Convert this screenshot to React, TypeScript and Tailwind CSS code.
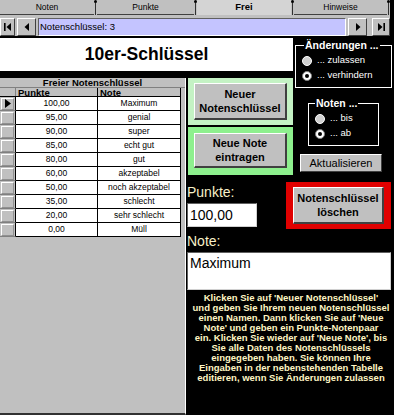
import React from "react";

const rows = [
  ["100,00", "Maximum"],
  ["95,00", "genial"],
  ["90,00", "super"],
  ["85,00", "echt gut"],
  ["80,00", "gut"],
  ["60,00", "akzeptabel"],
  ["50,00", "noch akzeptabel"],
  ["35,00", "schlecht"],
  ["20,00", "sehr schlecht"],
  ["0,00", "Müll"],
];

const hint = [
  "Klicken Sie auf 'Neuer Notenschlüssel'",
  "und geben Sie Ihrem neuen Notenschlüssel",
  "einen Namen. Dann klicken Sie auf 'Neue",
  "Note' und geben ein Punkte-Notenpaar",
  "ein. Klicken Sie wieder auf 'Neue Note', bis",
  "Sie alle Daten des Notenschlüssels",
  "eingegeben haben. Sie können Ihre",
  "Eingaben in der nebenstehenden Tabelle",
  "editieren, wenn Sie Änderungen zulassen",
];

const Sep = () => (
  <div className="flex flex-col items-center w-[3px] h-full">
    <div className="w-[3px] h-[3px] rounded-full bg-black" />
    <div className="w-px flex-1 bg-[#303030]" />
  </div>
);

const Tab = ({ label, w, active }: { label: string; w: string; active?: boolean }) => (
  <div
    className={`${w} h-full flex items-center justify-center ${
      active
        ? "bg-[#d4d4d4] font-bold text-[9.5px]"
        : "bg-[#c0c0c0] border-b border-[#404040] text-[8.5px]"
    } text-black`}
  >
    {label}
  </div>
);

const NavBtn = ({ w, children }: { w: string; children: React.ReactNode }) => (
  <div
    className={`${w} h-[18px] flex items-center justify-center bg-[#c0c0c0] border-t border-l border-white border-r border-b border-r-[#404040] border-b-[#404040]`}
  >
    {children}
  </div>
);

const Radio = ({ on }: { on?: boolean }) =>
  on ? (
    <div className="w-[10px] h-[10px] rounded-full bg-white border border-[#808080] flex items-center justify-center">
      <div className="w-[4px] h-[4px] rounded-full bg-black" />
    </div>
  ) : (
    <div className="w-[10px] h-[10px] rounded-full bg-[#d0d0d0] border border-white" />
  );

const Button = ({ children, className }: { children: React.ReactNode; className: string }) => (
  <div
    className={`${className} bg-[#c0c0c0] flex flex-col items-center justify-center text-black font-bold text-[11px] leading-[14px] border-t border-l border-white border-r-2 border-b-2 border-r-[#404040] border-b-[#404040]`}
  >
    {children}
  </div>
);

export default function App() {
  return (
    <div className="w-[394px] h-[415px] bg-black flex flex-col font-['Liberation_Sans',Arial,sans-serif] overflow-hidden">
      {/* tabs */}
      <div className="w-[390px] h-[15px] flex bg-[#c0c0c0]">
        <Tab label="Noten" w="w-[94px]" />
        <Sep />
        <Tab label="Punkte" w="w-[97px]" />
        <Sep />
        <Tab label="Frei" w="w-[94px]" active />
        <Sep />
        <Tab label="Hinweise" w="w-[93px]" />
        <Sep />
      </div>

      {/* record navigation */}
      <div className="w-[390px] h-[22px] bg-[#c0c0c0] flex items-start pt-[3px] gap-[2px] border-b border-black">
        <NavBtn w="w-[15px]">
          <svg width="8" height="8" viewBox="0 0 8 8">
            <rect x="0" y="0" width="1.6" height="8" fill="black" />
            <path d="M7 0 L2.5 4 L7 8 Z" fill="black" />
          </svg>
        </NavBtn>
        <NavBtn w="w-[19px]">
          <svg width="6" height="8" viewBox="0 0 6 8">
            <path d="M5 0 L0.5 4 L5 8 Z" fill="black" />
          </svg>
        </NavBtn>
        <div className="w-[308px] h-[18px] bg-[#c4c4ff] border-t border-l border-[#606060] border-r border-b border-r-white border-b-white flex items-center pl-[1px] text-[9.5px] text-black">
          Notenschlüssel: 3
        </div>
        <NavBtn w="w-[19px]">
          <svg width="6" height="8" viewBox="0 0 6 8">
            <path d="M1 0 L5.5 4 L1 8 Z" fill="black" />
          </svg>
        </NavBtn>
        <div className="w-[1px]" />
        <NavBtn w="w-[18px]">
          <svg width="8" height="8" viewBox="0 0 8 8">
            <path d="M1 0 L5.5 4 L1 8 Z" fill="black" />
            <rect x="6.4" y="0" width="1.6" height="8" fill="black" />
          </svg>
        </NavBtn>
      </div>

      {/* main */}
      <div className="flex-1 grid grid-cols-[186px_107px_101px] grid-rows-[34px_160px_1fr]">
        {/* title */}
        <div className="col-span-2 row-start-1 mt-[1px] h-[33px] bg-white flex items-center justify-center text-[17.5px] font-bold text-black">
          10er-Schlüssel
        </div>

        {/* table pane */}
        <div className="col-start-1 row-start-2 row-span-2 mt-[7px] bg-[#c0c0c0] border-r border-white border-b-2 border-b-[#303030] flex flex-col">
          <div className="h-[10px] flex items-center justify-center text-[9.5px] font-bold leading-[10px] text-black border-b border-[#808080]">
            Freier Notenschlüssel
          </div>
          <div className="flex">
            <div className="w-[181px] flex flex-col">
              <div className="h-[9px] flex border-b border-black">
                <div className="w-[16px] border-r border-[#808080]" />
                <div className="w-[82px] border-r border-black pl-[2px] text-[9.5px] font-bold leading-[9px] text-black">
                  Punkte
                </div>
                <div className="w-[83px] border-r border-black pl-[2px] text-[9.5px] font-bold leading-[9px] text-black">
                  Note
                </div>
              </div>
              {rows.map(([p, n], i) => (
                <div key={i} className="h-[14px] flex">
                  <div className="w-[16px] border-r border-black border-b border-b-[#808080] flex items-center justify-center bg-[#c0c0c0]">
                    <div className="w-[13px] h-[12px] border-t border-l border-white border-r border-b border-r-[#909090] border-b-[#909090] flex items-center justify-center">
                      {i === 0 && (
                        <svg width="6" height="9" viewBox="0 0 6 9">
                          <path d="M0 0 L6 4.5 L0 9 Z" fill="black" />
                        </svg>
                      )}
                    </div>
                  </div>
                  <div className="w-[82px] bg-white border-r border-b border-black flex items-center justify-center text-[8.5px] text-black">
                    {p}
                  </div>
                  <div className="w-[83px] bg-white border-r border-b border-black flex items-center justify-center text-[8.5px] text-black">
                    {n}
                  </div>
                </div>
              ))}
            </div>
            <div className="w-[4px] bg-[#c0c0c0]" />
          </div>
        </div>

        {/* middle column */}
        <div className="col-start-2 row-start-2 flex flex-col">
          <div className="mt-[7px] ml-[2px] w-[105px] h-[47px] bg-[#c4f2c4] pt-[5px] pb-[5px] px-[6px] flex">
            <Button className="flex-1">
              <span>Neuer</span>
              <span>Notenschlüssel</span>
            </Button>
          </div>
          <div className="mt-[2px] ml-[2px] w-[105px] h-[48px] bg-[#8ef08e] pt-[6px] pb-[7px] px-[6px] flex">
            <Button className="flex-1">
              <span>Neue Note</span>
              <span>eintragen</span>
            </Button>
          </div>
          <div className="mt-[9px] ml-[1px] h-[16px] text-[14px] leading-[16px] text-[#f8f0c8]">Punkte:</div>
          <div className="mt-[3px] ml-[1px] w-[70px] h-[24px] bg-white border-t border-l border-[#606060] border-r border-b border-r-[#d0d0d0] border-b-[#d0d0d0] flex items-center pl-[2px] text-[14px] text-black">
            100,00
          </div>
        </div>

        {/* right column */}
        <div className="col-start-3 row-start-1 row-span-2 flex flex-col">
          <fieldset className="mt-[2px] ml-[2px] w-[97px] h-[49px] border border-white px-[6px] pb-[2px]">
            <legend className="ml-[2px] px-[1px] text-[10.5px] font-bold text-white leading-[12px]">
              Änderungen ...
            </legend>
            <div className="flex items-center gap-[5px] h-[15px] mt-[2px] text-[9.5px] text-white">
              <Radio />
              <span>... zulassen</span>
            </div>
            <div className="flex items-center gap-[5px] h-[15px] text-[9.5px] text-white">
              <Radio on />
              <span>... verhindern</span>
            </div>
          </fieldset>
          <fieldset className="mt-[9px] ml-[15px] w-[71px] h-[49px] border border-white px-[6px] pb-[2px]">
            <legend className="px-[1px] text-[10.5px] font-bold text-white leading-[12px]">Noten ...</legend>
            <div className="flex items-center gap-[5px] h-[15px] mt-[2px] text-[9.5px] text-white">
              <Radio />
              <span>... bis</span>
            </div>
            <div className="flex items-center gap-[5px] h-[15px] text-[9.5px] text-white">
              <Radio on />
              <span>... ab</span>
            </div>
          </fieldset>
          <div className="mt-[8px] ml-[7px] w-[82px] h-[18px] bg-[#c0c0c0] border-t border-l border-white border-r border-b border-r-[#404040] border-b-[#404040] flex items-center justify-center text-[11px] text-black">
            Aktualisieren
          </div>
          <div className="mt-[10px] -ml-[7px] w-[105px] h-[47px] bg-[#e00000] pt-[5px] pb-[5px] px-[7px] flex">
            <Button className="flex-1">
              <span>Notenschlüssel</span>
              <span>löschen</span>
            </Button>
          </div>
        </div>

        {/* bottom: note + help */}
        <div className="col-start-2 col-span-2 row-start-3 flex flex-col">
          <div className="mt-[2px] ml-[1px] h-[16px] text-[14px] leading-[16px] text-[#f8f0c8]">Note:</div>
          <div className="mt-[3px] ml-[1px] w-[204px] h-[38px] bg-white border-t border-l border-[#606060] border-r border-b border-r-[#d0d0d0] border-b-[#d0d0d0] pl-[2px] pt-[2px] text-[14px] leading-[16px] text-black">
            Maximum
          </div>
          <div className="mt-[3px] ml-[3px] w-[204px] flex flex-col items-center text-[9.5px] leading-[10px] font-bold text-[#fff6c4] whitespace-nowrap">
            {hint.map((l, i) => (
              <span key={i}>{l}</span>
            ))}
          </div>
        </div>
      </div>
    </div>
  );
}
